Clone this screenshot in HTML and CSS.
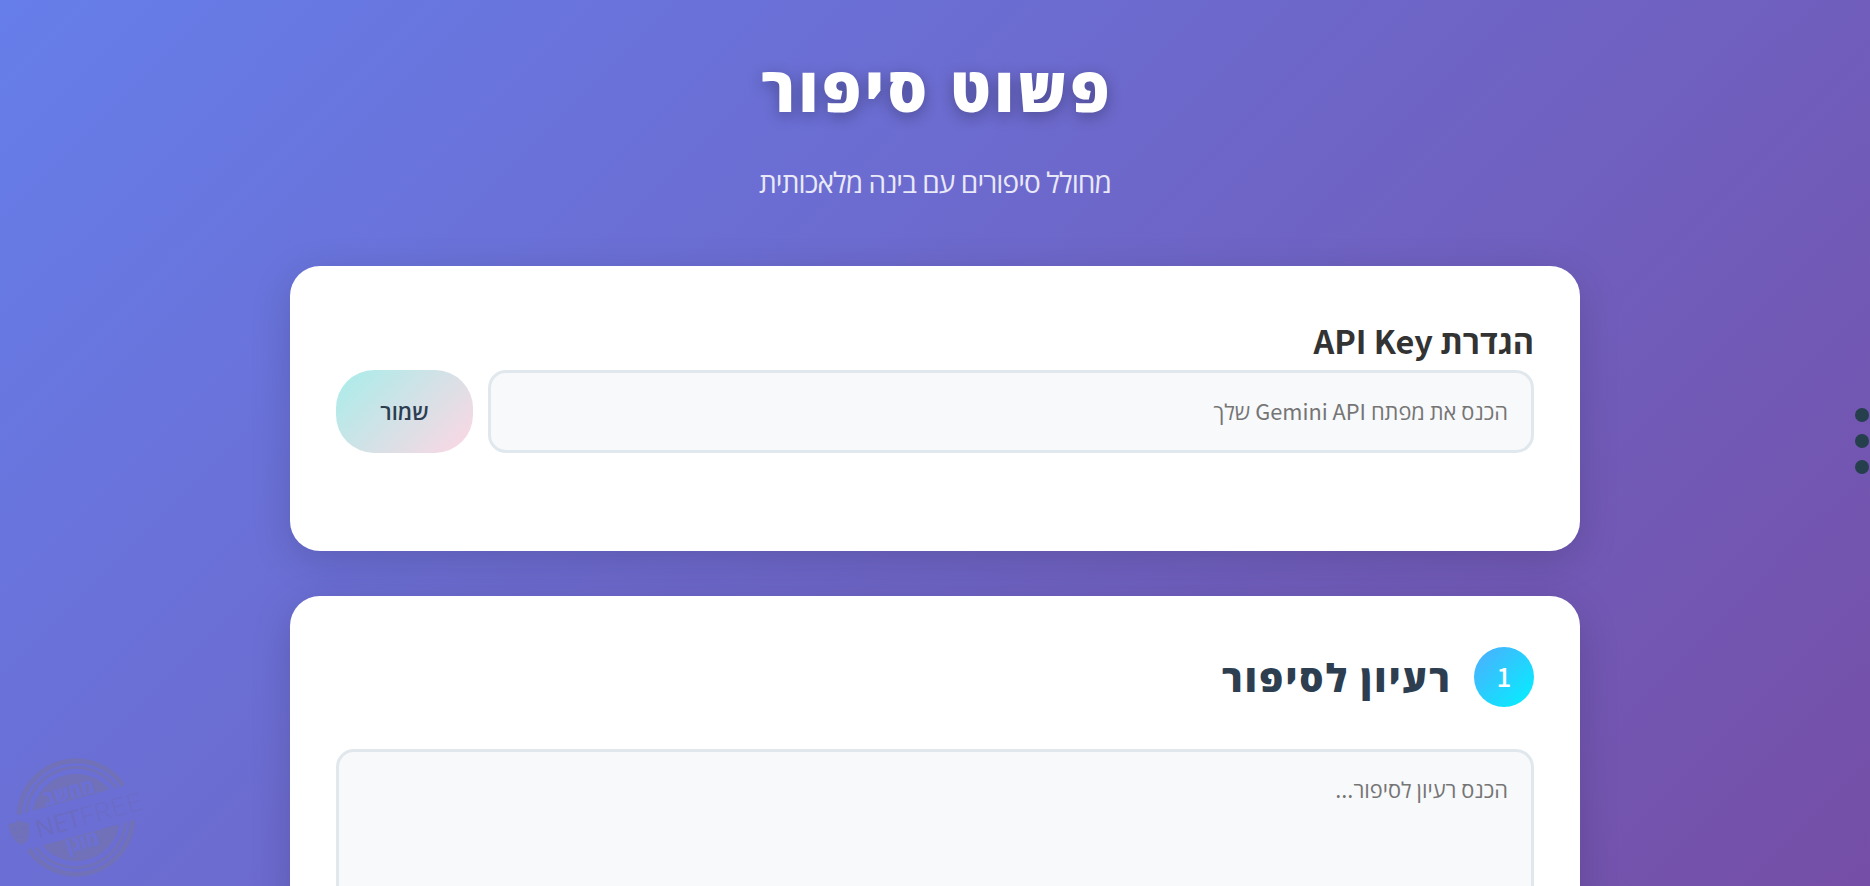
FILE: index.html
```html
<!DOCTYPE html>
<html lang="he" dir="rtl">
<head>
    <meta charset="UTF-8">
    <meta name="viewport" content="width=device-width, initial-scale=1.0">
    <title>פשוט סיפור</title>
    <link rel="stylesheet" href="styles.css">
</head>
<body>
    <div class="container">
        <header class="header">
            <h1>פשוט סיפור</h1>
            <p>מחולל סיפורים עם בינה מלאכותית</p>
        </header>

        <section class="card api-card">
            <h3>הגדרת API Key</h3>
            <div class="api-row">
                <input type="text" class="api-input" placeholder="הכנס את מפתח Gemini API שלך">
                <button type="button" class="save-btn">שמור</button>
            </div>
        </section>

        <section class="card step-card">
            <div class="step-header">
                <span class="step-number">1</span>
                <h2>רעיון לסיפור</h2>
            </div>
            <textarea class="idea-input" placeholder="הכנס רעיון לסיפור..."></textarea>
        </section>
    </div>

    <!-- Side menu dots -->
    <div class="side-dots">
        <span></span>
        <span></span>
        <span></span>
    </div>

    <!-- Corner stamp -->
    <svg class="stamp" width="160" height="146" viewBox="0 0 160 146" direction="ltr">
        <g transform="rotate(-15.5 76 77.5)">
            <g fill="none" stroke="#7071b8">
                <path stroke-width="5" d="M22 59.500A57 57 0 0 1 130 59.500M22 95.500A57 57 0 0 0 130 95.500"/>
                <path stroke-width="3" d="M29.300 59.500A50 50 0 0 1 122.700 59.500M29.300 95.500A50 50 0 0 0 122.700 95.500"/>
            </g>
            <path fill="#7071b8" d="M36 59.500A44 44 0 0 1 116 59.500ZM36 95.500A44 44 0 0 0 116 95.500Z"/>
        </g>
        <path fill="#7071b8" d="M8 84Q15 84 18 80Q22 83 29 83V95Q28 101 22 105Q12 102 8 84Z"/>
        <path fill="none" stroke="#6c6ec8" d="M12 88L17 90M27 87L22 89M14 96Q20 99 26 94"/>
        <g transform="rotate(-15.5 76 77.5)">
            <text class="stamp-cut" x="76" y="58.500" textLength="52" lengthAdjust="spacingAndGlyphs">מחשב</text>
            <text class="stamp-cut" x="76" y="110" textLength="33" lengthAdjust="spacingAndGlyphs">מוגן</text>
            <text class="stamp-name" x="34" y="87.500" textLength="46" lengthAdjust="spacingAndGlyphs">NET</text>
            <text class="stamp-name thin" x="80" y="87.500" textLength="64" lengthAdjust="spacingAndGlyphs">FREE</text>
        </g>
    </svg>
</body>
</html>
```
FILE: styles.css
```css
* {
    margin: 0;
    padding: 0;
    box-sizing: border-box;
}
body {
    font-family: "Noto Sans CJK SC", "Open Sans", sans-serif;
    height: 886px;
    overflow: hidden;
    background: linear-gradient(135deg, #667eea 0%, #764ba2 107%);
    color: #333;
}
.container {
    width: 1290px;
    margin: 0 auto;
}
.header {
    height: 266px;
    padding-top: 43px;
    text-align: center;
    color: #fff;
}
.header h1 {
    font-family: "Open Sans", sans-serif;
    font-size: 62px;
    line-height: 90px;
    font-weight: 800;
    letter-spacing: 3.4px;
    margin-right: -4px;
    text-shadow: 0 4px 15px rgba(0, 0, 0, 0.3);
}
.header p {
    margin-top: 28px;
    font-family: "Open Sans", sans-serif;
    font-size: 28px;
    line-height: 42px;
    font-weight: 400;
    letter-spacing: -0.9px;
    opacity: 0.85;
}
.card {
    background: #fff;
    border-radius: 30px;
    padding: 51px 46px 46px;
    margin-bottom: 45px;
    box-shadow: 0 10px 40px rgba(0, 0, 0, 0.15);
}
.api-card {
    height: 285px;
    padding-top: 50px;
}
.api-card h3 {
    font-size: 32.4px;
    line-height: 48px;
    font-weight: 700;
    margin-bottom: 6px;
}
.api-row {
    display: flex;
    gap: 15px;
    height: 83px;
}
.api-input, .idea-input {
    font-family: inherit;
    font-size: 21.8px;
    border: 3px solid #e1e8ed;
    border-radius: 18px;
    background: #f8f9fb;
    padding: 0 23px;
    outline: none;
}
.api-input {
    flex: 1;
    padding-bottom: 3px;
}
.api-input::placeholder, .idea-input::placeholder {
    color: #757575;
}
.save-btn {
    width: 137px;
    border: none;
    border-radius: 38px;
    background: linear-gradient(135deg, #a8edea 0%, #fed6e3 100%);
    color: #2c3e50;
    font-family: "Open Sans", sans-serif;
    font-size: 22px;
    font-weight: 600;
    padding-bottom: 2px;
    cursor: pointer;
}
.step-header {
    display: flex;
    align-items: center;
    gap: 22px;
    margin-bottom: 42px;
}
.step-number {
    width: 60px;
    height: 60px;
    border-radius: 50%;
    background: linear-gradient(135deg, #4facfe 0%, #00f2fe 100%);
    color: #fff;
    font-size: 26px;
    line-height: 58px;
    font-weight: 500;
    text-align: center;
}
.step-header h2 {
    font-family: "Open Sans", sans-serif;
    font-size: 38px;
    line-height: 54px;
    font-weight: 800;
    letter-spacing: 2.1px;
    color: #2c3e50;
}
.idea-input {
    display: block;
    width: 100%;
    height: 230px;
    padding-top: 18px;
    line-height: 38px;
    resize: none;
}
.side-dots {
    position: absolute;
    top: 408px;
    right: 1px;
    display: flex;
    flex-direction: column;
    gap: 12px;
}
.side-dots span {
    width: 14px;
    height: 14px;
    border-radius: 50%;
    background: #263f4d;
}
.stamp {
    position: absolute;
    left: 0;
    bottom: 0;
}
.stamp-cut {
    font: 800 21px "Open Sans", sans-serif;
    fill: #6c70d4;
    text-anchor: middle;
}
.stamp-name {
    font: 400 25px "Open Sans", sans-serif;
    fill: #6b6bbf;
}
.stamp-name.thin {
    font-weight: 300;
    fill: #6b6cc6;
}
```
